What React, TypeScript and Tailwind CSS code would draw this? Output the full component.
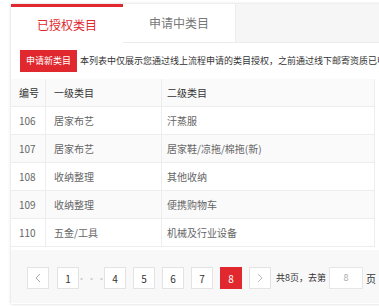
const rows = [
  { id: '106', first: '居家布艺', second: '汗蒸服' },
  { id: '107', first: '居家布艺', second: '居家鞋/凉拖/棉拖(新)' },
  { id: '108', first: '收纳整理', second: '其他收纳' },
  { id: '109', first: '收纳整理', second: '便携购物车' },
  { id: '110', first: '五金/工具', second: '机械及行业设备' },
];

const pageBtn =
  'flex h-[22px] w-[22px] items-center justify-center border border-[#e3e3e3] bg-white text-[10px] text-[#333]';

export default function App() {
  return (
    <div
      className="h-[306px] w-[379px] overflow-hidden bg-white pl-[11px] pt-[4px]"
      style={{ fontFamily: '"Noto Sans CJK SC", "Microsoft YaHei", sans-serif' }}
    >
      <div className="h-[300px] w-[400px] overflow-hidden bg-white shadow-[0_0_3px_rgba(0,0,0,0.18)]">
        {/* Tabs */}
        <div className="flex h-[39px]">
          <div className="flex w-[112px] items-center justify-center border-t-[3px] border-[#e0282e] bg-white text-[12px] text-[#e0282e]">
            已授权类目
          </div>
          <div className="flex w-[113px] items-center justify-center border-b border-r border-[#ececec] bg-white text-[12px] text-[#777]">
            申请中类目
          </div>
          <div className="flex-1 border-b border-[#ececec] bg-[#f6f6f6]" />
        </div>

        {/* Notice */}
        <div className="flex items-center gap-[3px] whitespace-nowrap px-[9px] pt-[7px]">
          <div className="flex h-[22px] w-[57px] shrink-0 items-center justify-center bg-[#e0282e] text-[9px] text-white">
            申请新类目
          </div>
          <span className="text-[9px] text-[#333]">
            本列表中仅展示您通过线上流程申请的类目授权，之前通过线下邮寄资质已申请的
          </span>
        </div>

        {/* Table */}
        <div className="mt-[7px] w-[364px] text-[10px]">
          <div className="flex h-[28px] items-center border-b border-[#ededed] bg-[#fafafa] text-[#333]">
            <div className="flex h-full w-[35px] items-center border-r border-[#ededed] pl-[8px]">编号</div>
            <div className="flex h-full w-[116px] items-center border-r border-[#ededed] pl-[8px]">一级类目</div>
            <div className="flex h-full flex-1 items-center border-r border-[#ededed] pl-[5px]">二级类目</div>
          </div>
          {rows.map((r, i) => (
            <div
              key={r.id}
              className={`flex h-[28px] items-center border-b border-[#ededed] text-[#666] ${
                i % 2 === 1 ? 'bg-[#fafafa]' : 'bg-white'
              }`}
            >
              <div className="flex h-full w-[35px] items-center border-r border-[#ededed] pl-[8px]">{r.id}</div>
              <div className="flex h-full w-[116px] items-center border-r border-[#ededed] pl-[8px]">{r.first}</div>
              <div className="flex h-full flex-1 items-center border-r border-[#ededed] pl-[5px]">{r.second}</div>
            </div>
          ))}
        </div>

        {/* Pagination */}
        <div className="mt-[3px] flex h-[53px] items-start whitespace-nowrap bg-[#f8f8f8] pl-[16px] pt-[17px]">
          <div className={pageBtn}>
            <svg width="8" height="10" viewBox="0 0 8 10" fill="none" stroke="#aaa" strokeWidth="1">
              <path d="M6 1L2 5l4 4" />
            </svg>
          </div>
          <div className={`${pageBtn} ml-[8px]`}>1</div>
          <div className="flex h-[22px] w-[25px] items-center justify-center text-[10px] text-[#ccc]">···</div>
          <div className={pageBtn}>4</div>
          <div className={`${pageBtn} ml-[7px]`}>5</div>
          <div className={`${pageBtn} ml-[7px]`}>6</div>
          <div className={`${pageBtn} ml-[7px]`}>7</div>
          <div className="ml-[7px] flex h-[22px] w-[22px] items-center justify-center bg-[#e0282e] text-[10px] text-white">
            8
          </div>
          <div className={`${pageBtn} ml-[7px]`}>
            <svg width="8" height="10" viewBox="0 0 8 10" fill="none" stroke="#bbb" strokeWidth="1">
              <path d="M2 1l4 4-4 4" />
            </svg>
          </div>
          <span className="ml-[5px] flex h-[22px] items-center text-[9px] text-[#333]">共8页，去第</span>
          <div className="ml-[3px] flex h-[22px] w-[34px] items-center justify-center border border-[#e6e6e6] bg-white text-[9px] text-[#aaa]">
            8
          </div>
          <span className="ml-[3px] flex h-[22px] items-center text-[10px] text-[#333]">页</span>
        </div>
      </div>
    </div>
  );
}
